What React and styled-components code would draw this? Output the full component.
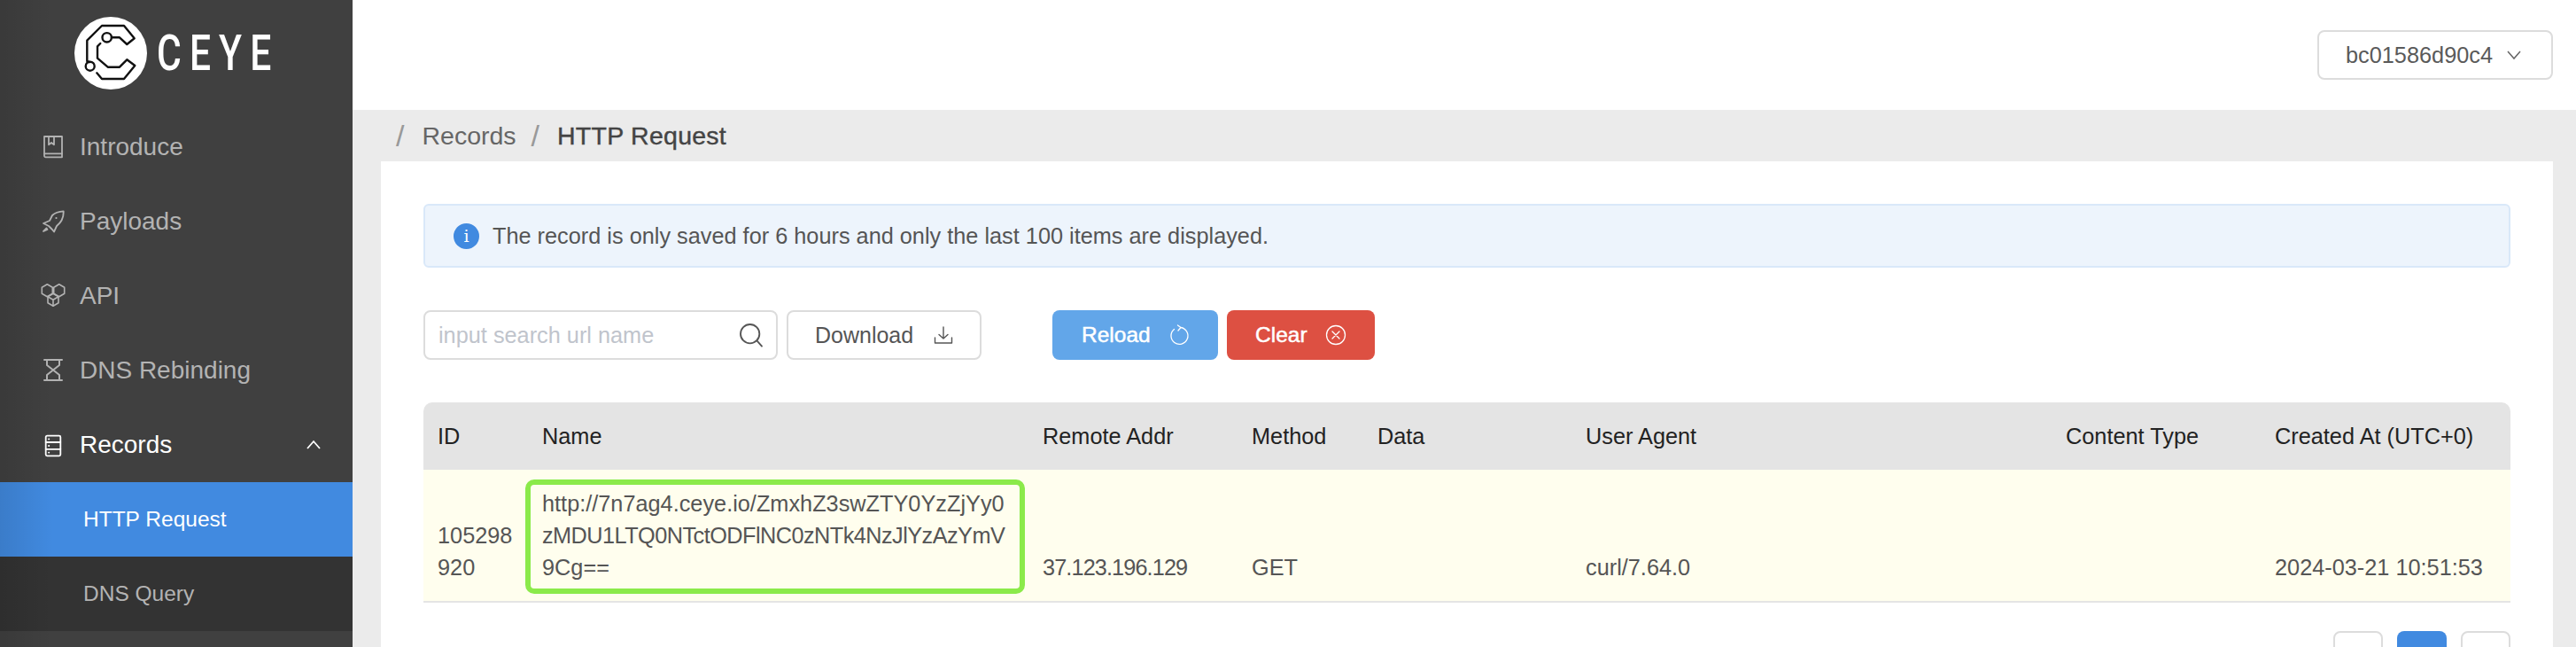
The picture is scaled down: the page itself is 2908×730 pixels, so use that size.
import React from "react";
import styled, { createGlobalStyle } from "styled-components";

const GlobalStyle = createGlobalStyle`
html, body {
  margin: 0;
  padding: 0;
  height: 730px;
  overflow: hidden;
  background: #ebebeb;
  font-family: "Liberation Sans", Arial, sans-serif;
}
* { box-sizing: border-box; }
`;

const Page = styled.div`
display: flex;
width: 2908px;
height: 730px;
overflow: hidden;
`;

const Sidebar = styled.aside`
position: relative;
flex: 0 0 398px;
height: 730px;
background: #404040;
&::after{
  content: "";
  position: absolute;
  inset: 0;
  pointer-events: none;
  background: linear-gradient(to right, rgba(0,0,0,.1), rgba(0,0,0,0) 60px);
}
`;

const LogoRow = styled.div`
display: flex;
align-items: center;
height: 124px;
padding: 0 0 5px 84px;
`;

const LogoWord = styled.span`
margin-left: 11px;
color: #fff;
font-family: "Roboto", sans-serif;
font-size: 56px;
font-weight: 500;
line-height: 1;
letter-spacing: 12px;
transform: scaleX(.76);
transform-origin: left center;
`;

const MenuItem = styled.div`
display: flex;
align-items: center;
height: 84px;
padding-left: 42px;
font-size: 28px;
color: ${p => p.$open ? "#fff" : "#b3b3b3"};
svg{
  flex: 0 0 36px;
  margin-right: 12px;
}
`;

const Caret = styled.svg`
margin-left: auto;
margin-right: 34px !important;
flex: 0 0 20px !important;
`;

const SubItem = styled.div`
display: flex;
align-items: center;
height: 84px;
padding-left: 94px;
font-size: 24.5px;
color: ${p => p.$active ? "#fff" : "#b3b3b3"};
background: ${p => p.$active ? "#418ae0" : "#333333"};
`;

const Main = styled.main`
flex: 1;
display: flex;
flex-direction: column;
min-width: 0;
`;

const TopBar = styled.header`
display: flex;
justify-content: flex-end;
align-items: center;
flex: 0 0 124px;
padding-right: 26px;
background: #fff;
`;

const UserSelect = styled.div`
display: flex;
align-items: center;
width: 266px;
height: 56px;
padding-left: 30px;
border: 2px solid #dcdcdc;
border-radius: 8px;
font-size: 25.3px;
color: #5a5a5a;
svg{ margin-left: 15px; }
`;

const Crumbs = styled.nav`
display: flex;
align-items: center;
flex: 0 0 58px;
padding-left: 49px;
font-size: 28.5px;
color: #666;
`;

const Slash = styled.span`
color: #999;
font-size: 34px;
line-height: 1;
margin-right: 20px;
`;

const Crumb = styled.span`
margin-right: 17px;
color: ${p => p.$current ? "#444" : "#666"};
letter-spacing: ${p => p.$current ? ".25px" : "0"};
-webkit-text-stroke: ${p => p.$current ? ".4px #444" : "0"};
`;

const Card = styled.section`
flex: 1;
margin: 0 26px 0 32px;
padding: 48px 48px 0;
background: #fff;
`;

const Notice = styled.div`
display: flex;
align-items: center;
gap: 15px;
height: 72px;
padding-left: 32px;
background: #edf4fc;
border: 2px solid #d9e8f9;
border-radius: 6px;
font-size: 25.3px;
color: #555;
`;

const InfoDot = styled.span`
display: flex;
align-items: center;
justify-content: center;
width: 29px;
height: 29px;
border-radius: 50%;
background: #418ae0;
color: #fff;
font-family: "DejaVu Serif", serif;
font-size: 19px;
`;

const Toolbar = styled.div`
display: flex;
align-items: center;
height: 56px;
margin-top: 48px;
`;

const SearchBox = styled.div`
display: flex;
align-items: center;
width: 400px;
height: 56px;
padding: 0 12px 0 15px;
border: 2px solid #dcdcdc;
border-radius: 8px;
background: #fff;
margin-right: 10px;
`;

const SearchInput = styled.input`
flex: 1;
min-width: 0;
border: 0;
outline: 0;
padding: 0;
background: transparent;
font-family: inherit;
font-size: 25.3px;
color: #555;
&::placeholder{ color: #c0c4cc; opacity: 1; }
`;

const ActionButton = styled.button`
display: flex;
align-items: center;
height: 56px;
width: ${p => p.$w}px;
margin-right: ${p => p.$gap || 0}px;
padding: 0 0 0 ${p => p.$pad}px;
gap: ${p => p.$iconGap}px;
border: ${p => p.$bg ? "0" : "2px solid #dcdcdc"};
border-radius: 8px;
background: ${p => p.$bg || "#fff"};
color: ${p => p.$bg ? "#fff" : "#555"};
font-family: inherit;
font-size: ${p => p.$bg ? 24.5 : 25}px;
-webkit-text-stroke: ${p => p.$bg ? ".5px #fff" : "0"};
`;

const RecordsTable = styled.table`
width: 2356px;
margin-top: 48px;
border-collapse: separate;
border-spacing: 0;
table-layout: fixed;
font-size: 25.3px;
line-height: 36px;
`;

const HeadCell = styled.th`
height: 76px;
padding: 0 16px;
background: #e4e4e4;
color: #222;
font-weight: 400;
text-align: left;
white-space: nowrap;
&:first-child{ border-top-left-radius: 10px; }
&:last-child{ border-top-right-radius: 10px; }
`;

const BodyCell = styled.td`
position: relative;
padding: 20px 16px;
background: #fffeee;
border-bottom: 2px solid #e4e4e4;
color: #555;
vertical-align: bottom;
word-break: break-all;
letter-spacing: ${p => p.$tight ? "-.9px" : "0"};
`;

const UrlLine = styled.span`
display: block;
white-space: nowrap;
letter-spacing: ${p => p.$tight ? "-.55px" : "0"};
`;

// the green box is an annotation drawn over the screenshot
const Highlight = styled.div`
position: absolute;
top: 11px;
bottom: 8px;
left: -3px;
right: 4px;
border: 6px solid #8bea4a;
border-radius: 10px;
pointer-events: none;
`;

const Pager = styled.div`
display: flex;
justify-content: flex-end;
gap: 16px;
margin-top: 32px;
`;

const PageBtn = styled.div`
width: 56px;
height: 56px;
border-radius: 8px;
border: ${p => p.$active ? "0" : "2px solid #dcdcdc"};
background: ${p => p.$active ? "#418ae0" : "#fff"};
`;

const columns = [
  ["ID", 118],
  ["Name", 565],
  ["Remote Addr", 236],
  ["Method", 142],
  ["Data", 235],
  ["User Agent", 542],
  ["Content Type", 236],
  ["Created At (UTC+0)", 282],
];

const Line = ({ children, size = 24, width = 1.5, view = "0 0 24 24", color = "currentColor" }) => (
  <svg width={size} height={size} viewBox={view} fill="none" stroke={color} strokeWidth={width} strokeLinecap="round" strokeLinejoin="round">
    {children}
  </svg>
);

const MenuIcon = ({ children, width = 1.8 }) => (
  <Line size={36} view="0 0 36 36" width={width}>{children}</Line>
);

function LogoMark() {
  return (
    <svg width="82" height="82" viewBox="0 0 82 82" fill="none">
      <circle cx="41" cy="41" r="41" fill="#fff" />
      <g stroke="#111" strokeWidth="2.4" strokeLinejoin="round" strokeLinecap="round">
        <path d="M17 51L14.3 50V26.7L31 10H56L67.7 24.3L59.3 31L51 23.3H42" />
        <circle cx="36.7" cy="23.3" r="5.2" />
        <circle cx="17.7" cy="55.7" r="5" />
        <path d="M29.3 30L26 33.3V46.7L37.7 56.7H51L59.3 48.3L68.3 55L56 70H31L25.3 63.3" />
      </g>
    </svg>
  );
}

const BookIcon = () => (
  <MenuIcon>
    <path d="M8 6H28V29.3H9.5A1.5 1.5 0 0 1 8 27.8Z" />
    <path d="M8 25.3H28" />
    <path d="M13 6V15.3L16 13L19 15.3V6" />
  </MenuIcon>
);

const RocketIcon = () => (
  <MenuIcon>
    <path d="M29.7 6.3C24 6.5 20 8 17 11L14 17L7 20L13 23L17 27L19 29.5L22 23C27 19 30 13 29.7 6.3Z" />
    <circle cx="21.5" cy="14" r="1.1" fill="currentColor" stroke="none" />
    <path d="M10.5 25.5L11.5 27L7 29Z" fill="currentColor" />
  </MenuIcon>
);

const CubesIcon = () => (
  <MenuIcon width={1.6}>
    <path d="M11.3 4.7L17.3 8.2V15.2L11.3 18.7L5.3 15.2V8.2Z" />
    <path d="M24.7 4.7L30.7 8.2V15.2L24.7 18.7L18.7 15.2V8.2Z" />
    <path d="M18 15.3L24 18.8V25.8L18 29.3L12 25.8V18.8Z" />
    <path d="M12 18.8L18 22.3L24 18.8M18 22.3V29.3" />
  </MenuIcon>
);

const HourglassIcon = () => (
  <MenuIcon width={2}>
    <path d="M8 6H28M8 29H28" />
    <path d="M11 6V12L25 23V29M25 6V12L11 23V29" />
  </MenuIcon>
);

const ServerIcon = () => (
  <MenuIcon>
    <rect x="9.7" y="7.7" width="16.6" height="22.6" rx="1.5" />
    <path d="M9.7 15H26.3M9.7 22.8H26.3" />
    <path d="M13 11.4H13.3M13 19H13.3M13 26.6H13.3" />
  </MenuIcon>
);

export default function App() {
  return (
    <Page>
      <GlobalStyle />
      <Sidebar>
        <LogoRow>
          <LogoMark />
          <LogoWord>CEYE</LogoWord>
        </LogoRow>
        <MenuItem><BookIcon />Introduce</MenuItem>
        <MenuItem><RocketIcon />Payloads</MenuItem>
        <MenuItem><CubesIcon />API</MenuItem>
        <MenuItem><HourglassIcon />DNS Rebinding</MenuItem>
        <MenuItem $open>
          <ServerIcon />Records
          <Caret width="20" height="20" viewBox="0 0 20 20" fill="none" stroke="#fff" strokeWidth="1.8">
            <path d="M3 14L10 6L17 14" />
          </Caret>
        </MenuItem>
        <SubItem $active>HTTP Request</SubItem>
        <SubItem>DNS Query</SubItem>
      </Sidebar>
      <Main>
        <TopBar>
          <UserSelect>
            bc01586d90c4
            <svg width="18" height="18" viewBox="0 0 18 18" fill="none" stroke="#666" strokeWidth="1.5">
              <path d="M2 5L9 13L16 5" />
            </svg>
          </UserSelect>
        </TopBar>
        <Crumbs>
          <Slash>/</Slash>
          <Crumb>Records</Crumb>
          <Slash>/</Slash>
          <Crumb $current>HTTP Request</Crumb>
        </Crumbs>
        <Card>
          <Notice>
            <InfoDot>i</InfoDot>
            The record is only saved for 6 hours and only the last 100 items are displayed.
          </Notice>
          <Toolbar>
            <SearchBox>
              <SearchInput placeholder="input search url name" />
              <Line size={32} width={1.4} color="#555">
                <circle cx="11" cy="11" r="8" />
                <path d="M17 17L21 21.5" />
              </Line>
            </SearchBox>
            <ActionButton $w={220} $pad={30} $iconGap={22} $gap={80}>
              Download
              <Line size={24} width={1.4} color="#555">
                <path d="M12 3V16M7 11.5L12 16L17 11.5M2.5 15V21H21.5V15" />
              </Line>
            </ActionButton>
            <ActionButton $bg="#62a6e9" $w={187} $pad={33} $iconGap={21} $gap={10}>
              Reload
              <Line size={24} width={1.3} color="#fff">
                <path d="M13 3.5A9.5 9.5 0 1 1 5.5 5.5M9.5 1L13 3.5L10 7" />
              </Line>
            </ActionButton>
            <ActionButton $bg="#dd5042" $w={167} $pad={32} $iconGap={20}>
              Clear
              <Line size={24} width={1.3} color="#fff">
                <circle cx="12" cy="12" r="10.5" />
                <path d="M8 8L16 16M16 8L8 16" />
              </Line>
            </ActionButton>
          </Toolbar>
          <RecordsTable>
            <colgroup>
              {columns.map(([name, w]) => <col key={name} width={w} />)}
            </colgroup>
            <thead>
              <tr>
                {columns.map(([name]) => <HeadCell key={name}>{name}</HeadCell>)}
              </tr>
            </thead>
            <tbody>
              <tr>
                <BodyCell>105298920</BodyCell>
                <BodyCell>
                  <UrlLine>http://7n7ag4.ceye.io/ZmxhZ3swZTY0YzZjYy0</UrlLine>
                  <UrlLine $tight>zMDU1LTQ0NTctODFlNC0zNTk4NzJlYzAzYmV</UrlLine>
                  <UrlLine>9Cg==</UrlLine>
                  <Highlight />
                </BodyCell>
                <BodyCell $tight>37.123.196.129</BodyCell>
                <BodyCell>GET</BodyCell>
                <BodyCell></BodyCell>
                <BodyCell>curl/7.64.0</BodyCell>
                <BodyCell></BodyCell>
                <BodyCell>2024-03-21 10:51:53</BodyCell>
              </tr>
            </tbody>
          </RecordsTable>
          <Pager>
            <PageBtn />
            <PageBtn $active />
            <PageBtn />
          </Pager>
        </Card>
      </Main>
    </Page>
  );
}
